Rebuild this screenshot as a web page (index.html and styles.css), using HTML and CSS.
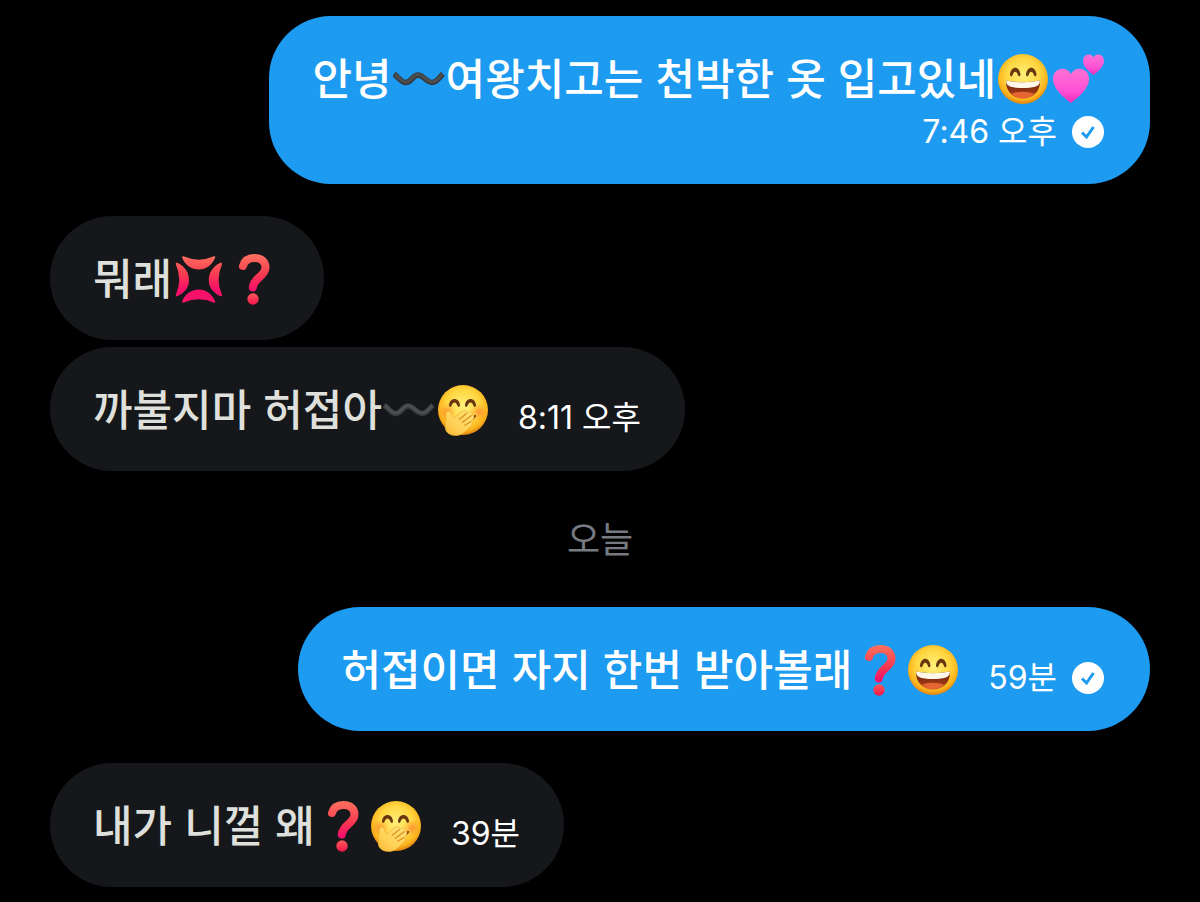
FILE: index.html
```html
<!DOCTYPE html>
<html lang="ko">
<head>
    <meta charset="UTF-8">
    <meta name="viewport" content="width=device-width, initial-scale=1.0">
    <title>Messages</title>
    <link rel="stylesheet" href="styles.css">
</head>
<body>
    <!-- Shared emoji and icon shapes -->
    <svg class="sprite" aria-hidden="true">
        <defs>
            <radialGradient id="face" cx="50%" cy="42%" r="56%">
                <stop offset="0" stop-color="#fff07a"/>
                <stop offset="0.6" stop-color="#ffd640"/>
                <stop offset="0.88" stop-color="#fbb31c"/>
                <stop offset="1" stop-color="#e48a12"/>
            </radialGradient>
            <radialGradient id="blush">
                <stop offset="0" stop-color="#ff6a2c" stop-opacity="0.6"/>
                <stop offset="1" stop-color="#ff8a2c" stop-opacity="0"/>
            </radialGradient>
            <linearGradient id="mouth" x1="0" y1="0" x2="0" y2="1">
                <stop offset="0" stop-color="#6d2412"/>
                <stop offset="0.6" stop-color="#943414"/>
                <stop offset="1" stop-color="#d95f2a"/>
            </linearGradient>
            <linearGradient id="hand" x1="1" y1="0" x2="0" y2="1">
                <stop offset="0" stop-color="#ffe07a"/>
                <stop offset="0.6" stop-color="#ffd258"/>
                <stop offset="1" stop-color="#f9b834"/>
            </linearGradient>
            <linearGradient id="red" gradientUnits="userSpaceOnUse" x1="0" y1="3" x2="0" y2="52">
                <stop offset="0" stop-color="#ff705f"/>
                <stop offset="0.4" stop-color="#f93a50"/>
                <stop offset="0.7" stop-color="#f8106a"/>
                <stop offset="1" stop-color="#f51468"/>
            </linearGradient>
            <linearGradient id="dot" x1="0" y1="0" x2="0" y2="1">
                <stop offset="0" stop-color="#ff5a58"/>
                <stop offset="1" stop-color="#f0144c"/>
            </linearGradient>
            <linearGradient id="pink" x1="0" y1="0" x2="0" y2="1">
                <stop offset="0" stop-color="#ff72d4"/>
                <stop offset="0.65" stop-color="#ff50d6"/>
                <stop offset="1" stop-color="#f02cb8"/>
            </linearGradient>
        </defs>
        <symbol id="grin" viewBox="0 0 53 53">
            <circle cx="26" cy="27" r="25" fill="url(#face)"/>
            <g fill="#693611">
                <path d="M13 22.5C14 13.5 22.5 13.5 23.5 22.5C23.4 24.8 21.5 24.8 20.9 23C19.6 18.7 16.9 18.7 15.6 23C15 24.8 13.1 24.8 13 22.5Z"/>
                <path d="M29 22.5C30 13.5 38.5 13.5 39.5 22.5C39.4 24.8 37.5 24.8 36.9 23C35.6 18.7 32.9 18.7 31.6 23C31 24.8 29.1 24.8 29 22.5Z"/>
            </g>
            <path d="M9 28.5Q26 32 43 28.5C43.5 40 35.5 46.5 26 46.5C16.5 46.5 8.5 40 9 28.5Z" fill="url(#mouth)"/>
            <path d="M15 42C20 39 32 39 37 42C31 47.5 21 47.5 15 42Z" fill="#e56633"/>
            <path d="M9 28.5Q26 32 43 28.5L42.5 31.5C41 34.5 36 36 26 36C16 36 11 34.5 9.5 31.5Z" fill="#fff8e8"/>
        </symbol>
        <symbol id="giggle" viewBox="0 0 53 53">
            <circle cx="26" cy="27" r="25" fill="url(#face)"/>
            <circle cx="10" cy="29" r="9" fill="url(#blush)"/>
            <circle cx="42" cy="29" r="9" fill="url(#blush)"/>
            <g fill="#693611">
                <path d="M12 22C13 14 22 14 23 22C23 24.5 21 24.5 20.4 22.5C19 18.5 16 18.5 14.6 22.5C14 24.5 12 24.5 12 22Z"/>
                <path d="M28 22C29 14 38 14 39 22C39 24.5 37 24.5 36.4 22.5C35 18.5 32 18.5 30.6 22.5C30 24.5 28 24.5 28 22Z"/>
            </g>
            <path d="M34 36.5Q36.5 36 38 33" fill="none" stroke="#6b3210" stroke-width="2" stroke-linecap="round"/>
            <path d="M9 31C9 27.5 13 27 14.5 30.5L16.5 35L25.5 28C28 26.5 30.5 28.5 29.5 30.5L31.5 29C34 28 36 30.5 34.5 32.5C37 32 38 34.5 36 36.5L34 38.5C36 39 36 41 34.5 42.5L27 49.5C22 54 13 53.5 9.5 48.5C6.5 44 10 38 9 31Z" fill="url(#hand)" stroke="#f0a92c" stroke-width="0.6"/>
            <path d="M22 36.5L29.5 30.5M25 39.5L34.5 32.5M27.5 42.5L34 38.5" fill="none" stroke="#d98f1d" stroke-width="1.2"/>
        </symbol>
        <symbol id="hearts" viewBox="0 0 53 53">
            <path d="M20 51C15 47 2 37.5 2 27C2 15.5 15.5 13.5 20 22C24.5 13.5 38 15.5 38 27C38 37.5 25 47 20 51Z" fill="url(#pink)"/>
            <path d="M42.5 23C39 20 32 15 32 9C32 2 40 .5 42.5 5.5C45 .5 53 2 53 9C53 15 46 20 42.5 23Z" fill="url(#pink)"/>
        </symbol>
        <symbol id="anger" viewBox="0 0 53 53">
            <g fill="url(#red)">
                <path d="M10.3 4.3Q26 11 41 4.3C42.3 4 42.6 5 42 6C38.5 13.5 33 17.5 26 17.5C18.5 17.5 12.5 13.5 9.3 6C8.9 5 9.3 4 10.3 4.3Z"/>
                <path d="M10.3 50.7Q26 44 41 50.7C42.3 51 42.6 50 42 49C38.5 41.5 33 37.5 26 37.5C18.5 37.5 12.5 41.5 9.3 49C8.9 50 9.3 51 10.3 50.7Z"/>
                <path d="M2.9 12.5Q9.5 28 2.9 42.5C2.4 44 3.5 44.8 4.8 44C12.5 40 16 35 16 28C16 21 12.5 15 4.8 11C3.5 10.3 2.4 11 2.9 12.5Z"/>
                <path d="M48.9 12.5Q42.3 28 48.9 42.5C49.4 44 48.3 44.8 47 44C39.3 40 35.8 35 35.8 28C35.8 21 39.3 15 47 11C48.3 10.3 49.4 11 48.9 12.5Z"/>
            </g>
        </symbol>
        <symbol id="question" viewBox="0 0 53 53">
            <path d="M16 14C17.5 8.5 21.5 6 27.5 6C34.5 6 38.5 10 38.5 15.5C38.5 24.5 27 25 25.8 35.5" fill="none" stroke="url(#red)" stroke-width="8" stroke-linecap="round"/>
            <circle cx="26" cy="47" r="5.7" fill="url(#dot)"/>
        </symbol>
        <symbol id="wave" viewBox="0 0 53 53">
            <path d="M1 22C6 25.5 8 30.5 13 30.5C18 30.5 20 23 25 23C30 23 34 30.5 39 30.5C44 30.5 46 25.5 50 22" fill="none" stroke="#36383a" stroke-width="5.5"/>
            <path d="M2 22.5C6 25.5 8 30 13 30C18 30 20 22.5 25 22.5C30 22.5 34 30 39 30C44 30 46 25.5 49.5 22.5" fill="none" stroke="#4c4e50" stroke-width="3"/>
        </symbol>
        <symbol id="sent" viewBox="0 0 32 32">
            <circle cx="16" cy="16" r="16" fill="#fff"/>
            <path d="M10 16.5L14.5 21L21.5 11" fill="none" stroke="#1d9bf0" stroke-width="3"/>
        </symbol>
    </svg>

    <main class="chat">
        <section class="group">
            <div class="bubble sent stacked">
                <p class="text">안녕<svg class="emoji" role="img" aria-label="〰️"><use href="#wave"/></svg>여왕치고는 천박한 옷 입고있네<svg class="emoji" role="img" aria-label="😄"><use href="#grin"/></svg><svg class="emoji" role="img" aria-label="💕"><use href="#hearts"/></svg></p>
                <div class="meta"><time>7:46 오후</time><svg class="check" aria-hidden="true"><use href="#sent"/></svg></div>
            </div>
        </section>

        <section class="group">
            <div class="bubble">
                <p class="text">뭐래<svg class="emoji" role="img" aria-label="💢"><use href="#anger"/></svg><svg class="emoji" role="img" aria-label="❓"><use href="#question"/></svg></p>
            </div>
            <div class="bubble">
                <p class="text">까불지마 허접아<svg class="emoji" role="img" aria-label="〰️"><use href="#wave"/></svg><svg class="emoji" role="img" aria-label="🤭"><use href="#giggle"/></svg></p>
                <div class="meta"><time>8:11 오후</time></div>
            </div>
        </section>

        <h2 class="day">오늘</h2>

        <section class="group">
            <div class="bubble sent">
                <p class="text">허접이면 자지 한번 받아볼래<svg class="emoji" role="img" aria-label="❓"><use href="#question"/></svg><svg class="emoji" role="img" aria-label="😄"><use href="#grin"/></svg></p>
                <div class="meta"><time>59분</time><svg class="check" aria-hidden="true"><use href="#sent"/></svg></div>
            </div>
        </section>

        <section class="group">
            <div class="bubble">
                <p class="text">내가 니껄 왜<svg class="emoji" role="img" aria-label="❓"><use href="#question"/></svg><svg class="emoji" role="img" aria-label="🤭"><use href="#giggle"/></svg></p>
                <div class="meta"><time>39분</time></div>
            </div>
        </section>
    </main>
</body>
</html>
```

FILE: styles.css
```css
* {
    box-sizing: border-box;
}

body {
    margin: 0;
    background-color: #000;
    color: #dfe0dc;
    font-family: "Noto Sans CJK KR", sans-serif;
}

.sprite {
    position: absolute;
    width: 0;
    height: 0;
}

.chat {
    display: flex;
    flex-direction: column;
    gap: 32px;
    padding: 16px 50px;
}

.group {
    display: flex;
    flex-direction: column;
    align-items: flex-start;
    gap: 7px;
}

.bubble {
    display: flex;
    align-items: flex-end;
    gap: 28px;
    padding: 33px 44px 37px 43px;
    border-radius: 62px;
    background-color: #15171a;
}

.sent {
    align-self: flex-end;
    padding-right: 46px;
    background-color: #1d9bf0;
    color: #fff;
}

.stacked {
    flex-direction: column;
    gap: 13px;
    padding-bottom: 36px;
}

.text {
    margin: 0;
    font-size: 43px;
    font-weight: 500;
    line-height: 54px;
}

.emoji {
    width: 53px;
    height: 53px;
    margin: -8px 0 -8px 1px;
    vertical-align: -2px;
}

.meta {
    display: flex;
    align-items: center;
    gap: 15px;
    color: #fff;
    font-family: Inter, "Noto Sans CJK KR", sans-serif;
    font-size: 32px;
    line-height: 32px;
}

.check {
    width: 32px;
    height: 32px;
}

.day {
    margin: 8px 0 12px;
    color: #777a80;
    font-size: 36px;
    font-weight: 400;
    line-height: 52px;
    text-align: center;
}
```
